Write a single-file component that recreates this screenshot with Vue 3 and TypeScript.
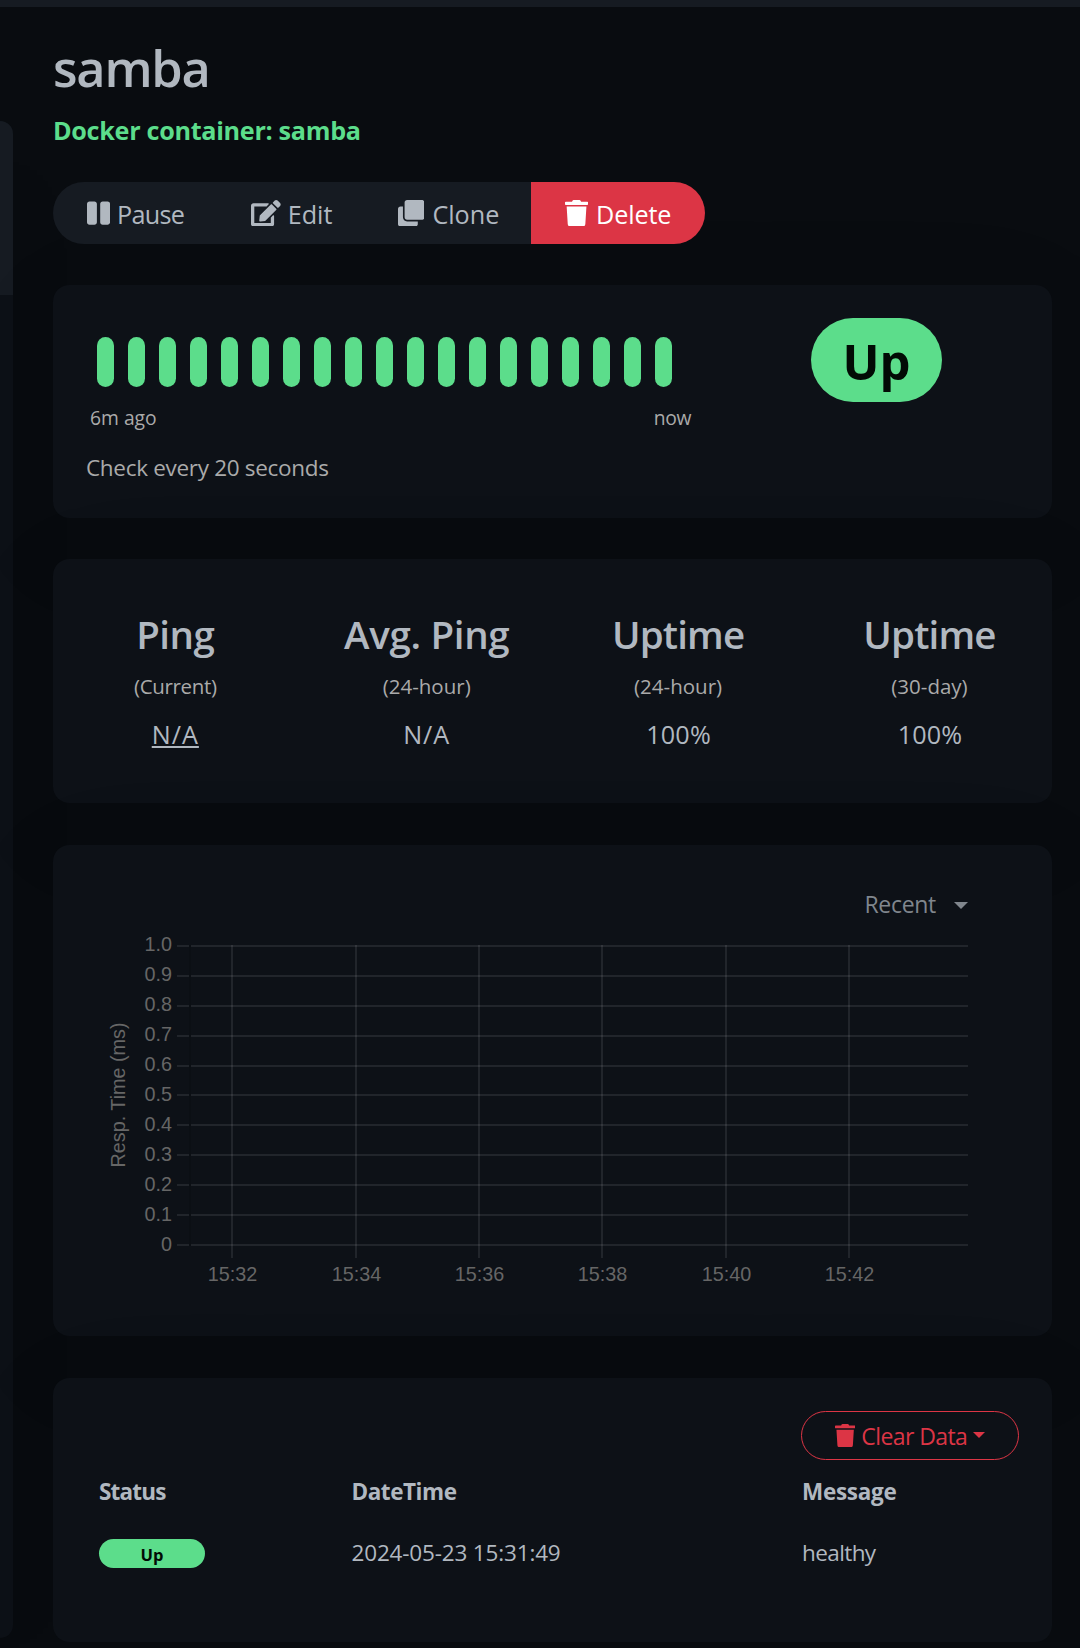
<script setup lang="ts">
interface Icon {
  w: number
  d: string
}

interface Action {
  key: string
  label: string
  icon: Icon
}

const trash: Icon = {
  w: 448,
  d: 'M432 32H312l-9.4-18.7A24 24 0 0 0 281.1 0H166.8a23.72 23.72 0 0 0-21.4 13.3L136 32H16A16 16 0 0 0 0 48v32a16 16 0 0 0 16 16h416a16 16 0 0 0 16-16V48a16 16 0 0 0-16-16zM53.2 467a48 48 0 0 0 47.9 45h245.8a48 48 0 0 0 47.9-45L416 128H32z',
}

const actions: Action[] = [
  {
    key: 'pause',
    label: 'Pause',
    icon: {
      w: 448,
      d: 'M144 479H48c-26.5 0-48-21.5-48-48V79c0-26.5 21.5-48 48-48h96c26.5 0 48 21.5 48 48v352c0 26.5-21.5 48-48 48zm304-48V79c0-26.5-21.5-48-48-48h-96c-26.5 0-48 21.5-48 48v352c0 26.5 21.5 48 48 48h96c26.5 0 48-21.5 48-48z',
    },
  },
  {
    key: 'edit',
    label: 'Edit',
    icon: {
      w: 576,
      d: 'M402.6 83.2l90.2 90.2c3.8 3.8 3.8 10 0 13.8L274.4 405.6l-92.8 10.3c-12.4 1.4-22.9-9.1-21.5-21.5l10.3-92.8L388.8 83.2c3.8-3.8 10-3.8 13.8 0zm162-22.9l-48.8-48.8c-15.2-15.2-39.9-15.2-55.2 0l-35.4 35.4c-3.8 3.8-3.8 10 0 13.8l90.2 90.2c3.8 3.8 10 3.8 13.8 0l35.4-35.4c15.2-15.3 15.2-40 0-55.2zM384 346.2V448H64V128h229.8c3.2 0 6.2-1.3 8.5-3.5l40-40c7.6-7.6 2.2-20.5-8.5-20.5H48C21.5 64 0 85.5 0 112v352c0 26.5 21.5 48 48 48h352c26.5 0 48-21.5 48-48V306.2c0-10.7-12.9-16-20.5-8.5l-40 40c-2.2 2.3-3.5 5.3-3.5 8.5z',
    },
  },
  {
    key: 'clone',
    label: 'Clone',
    icon: {
      w: 512,
      d: 'M464 0c26.51 0 48 21.49 48 48v288c0 26.51-21.49 48-48 48H176c-26.51 0-48-21.49-48-48V48c0-26.51 21.49-48 48-48h288M176 416c-44.112 0-80-35.888-80-80V128H48c-26.51 0-48 21.49-48 48v288c0 26.51 21.49 48 48 48h288c26.51 0 48-21.49 48-48v-48H176z',
    },
  },
  { key: 'delete', label: 'Delete', icon: trash },
]

const stats = [
  { key: 'ping', title: 'Ping', period: '(Current)', value: 'N/A', link: true },
  { key: 'avg', title: 'Avg. Ping', period: '(24-hour)', value: 'N/A', link: false },
  { key: 'up-day', title: 'Uptime', period: '(24-hour)', value: '100%', link: false },
  { key: 'up-month', title: 'Uptime', period: '(30-day)', value: '100%', link: false },
]

// Gridline tops inside the chart's own coordinate system
const rows = [
  { label: '1.0', y: 15 },
  { label: '0.9', y: 45 },
  { label: '0.8', y: 75 },
  { label: '0.7', y: 105 },
  { label: '0.6', y: 135 },
  { label: '0.5', y: 164 },
  { label: '0.4', y: 194 },
  { label: '0.3', y: 224 },
  { label: '0.2', y: 254 },
  { label: '0.1', y: 284 },
  { label: '0', y: 314 },
]
const times = [
  { label: '15:32', x: 145 },
  { label: '15:34', x: 269 },
  { label: '15:36', x: 392 },
  { label: '15:38', x: 515 },
  { label: '15:40', x: 639 },
  { label: '15:42', x: 762 },
]
</script>

<template>
  <div class="page">
    <header class="topbar"></header>
    <div class="body">
      <aside class="sidebar">
        <div class="sidebar-head"></div>
      </aside>

      <main class="content">
        <h1 class="title">samba</h1>
        <p class="subtitle">Docker container: samba</p>

        <div class="actions">
          <button v-for="a in actions" :key="a.key" class="action" :class="a.key">
            <svg class="icon" :viewBox="`0 0 ${a.icon.w} 512`"><path :d="a.icon.d" /></svg>
            <span>{{ a.label }}</span>
          </button>
        </div>

        <section class="card heartbeat">
          <div class="beats-col">
            <div class="beats">
              <i v-for="n in 19" :key="n" class="beat"></i>
            </div>
            <div class="range"><span>6m ago</span><span class="now">now</span></div>
            <p class="interval">Check every 20 seconds</p>
          </div>
          <div class="status-col"><span class="status-pill">Up</span></div>
        </section>

        <section class="card stats">
          <div v-for="s in stats" :key="s.key" class="stat" :class="s.key">
            <h4>{{ s.title }}</h4>
            <p class="period">{{ s.period }}</p>
            <p class="value" :class="{ na: s.value === 'N/A' }"><span :class="{ link: s.link }">{{ s.value }}</span></p>
          </div>
        </section>

        <section class="card chart-card">
          <div class="period-select">
            <span>Recent</span>
            <svg class="caret" viewBox="0 0 14 7"><path d="M0 0h14L7 7z" /></svg>
          </div>
          <svg class="chart" width="933" height="370" viewBox="0 0 933 370">
            <g class="grid">
              <template v-for="r in rows" :key="r.label">
                <rect x="91" :y="r.y" width="12" height="2" />
                <rect x="105" :y="r.y" width="777" height="2" />
              </template>
              <rect v-for="t in times" :key="t.label" :x="t.x" y="15" width="2" height="313" />
              <rect x="103" y="15" width="2" height="301" class="axis" />
            </g>
            <g class="labels">
              <text v-for="(r, i) in rows" :key="r.label" x="86" :y="21 + i * 30" text-anchor="end">{{ r.label }}</text>
              <text v-for="t in times" :key="t.label" :x="t.x + 1.4" y="351" text-anchor="middle">{{ t.label }}</text>
              <text transform="translate(39 165) rotate(-90)" text-anchor="middle">Resp. Time (ms)</text>
            </g>
          </svg>
        </section>

        <section class="card events">
          <div class="toolbar">
            <button class="clear">
              <svg class="icon" :viewBox="`0 0 ${trash.w} 512`"><path :d="trash.d" /></svg>
              <span>Clear Data</span>
              <svg class="caret" viewBox="0 0 12 6"><path d="M0 0h12L6 6z" /></svg>
            </button>
          </div>
          <div class="row head">
            <span class="h-status">Status</span><span class="h-date">DateTime</span><span class="h-msg">Message</span>
          </div>
          <div class="row">
            <span><b class="badge">Up</b></span><span class="date">2024-05-23 15:31:49</span><span class="msg">healthy</span>
          </div>
        </section>
      </main>
    </div>
  </div>
</template>

<style>
body {
  background: #090c10;
}
</style>

<style scoped>
.page {
  width: 1080px;
  height: 1648px;
  overflow: hidden;
  background: #090c10;
  color: #b1b8c0;
  font-family: "Open Sans", "Noto Sans", sans-serif;
}
h1, h4, p {
  margin: 0;
  font-weight: 400;
}
.topbar {
  height: 7px;
  background: #161b22;
}
.body {
  display: flex;
  align-items: flex-start;
}
.sidebar {
  flex: none;
  width: 13px;
  height: 1517px;
  margin-top: 114px;
  border-radius: 0 16px 16px 0;
  background: #0d1117;
  box-shadow: 0 25px 115px rgba(0, 0, 0, 0.07);
  overflow: hidden;
}
.sidebar-head {
  height: 174px;
  background: #161b22;
}
.content {
  width: 999px;
  margin-left: 40px;
  padding-top: 29px;
}
.title {
  font-size: 50.5px;
  font-weight: 600;
  line-height: 63px;
  letter-spacing: -1.25px;
}
.subtitle {
  margin-top: 12px;
  color: #5cdd8b;
  font-size: 25.2px;
  font-weight: 700;
  line-height: 39px;
  letter-spacing: -0.31px;
}
.actions {
  display: flex;
  width: 652px;
  height: 62px;
  margin-top: 32px;
  border-radius: 31px;
  overflow: hidden;
}
.action {
  display: flex;
  align-items: center;
  gap: 7px;
  border: 0;
  padding: 0 0 0 34px;
  background: #161b22;
  color: #b1b8c0;
  font: 400 25.2px/62px "Open Sans", sans-serif;
}
.action span {
  padding-top: 1px;
}
.icon {
  flex: none;
  height: 26.4px;
  fill: currentColor;
}
.pause { width: 165px; letter-spacing: -0.75px; }
.edit { width: 147px; padding-left: 33px; }
.clone { width: 166px; padding-left: 33px; gap: 8px; }
.delete { width: 174px; gap: 8px; background: #dc3545; color: #fff; letter-spacing: -0.15px; }
.card {
  box-sizing: border-box;
  margin-top: 41px;
  padding: 33px;
  border-radius: 16.5px;
  background: #0d1117;
  box-shadow: 0 25px 115px rgba(0, 0, 0, 0.07);
}
.heartbeat {
  display: flex;
  height: 233px;
}
.beats-col {
  width: 628px;
}
.beats {
  display: flex;
  gap: 14px;
  padding: 19px 0 0 11px;
}
.beat {
  flex: none;
  width: 17px;
  height: 50px;
  border-radius: 8.5px;
  background: #5cdd8b;
}
.range {
  display: flex;
  justify-content: space-between;
  margin-top: 16px;
  padding: 0 23px 0 4px;
  color: #aaa;
  font-size: 19.3px;
  line-height: 30px;
}
.now {
  letter-spacing: -0.4px;
}
.interval {
  margin-top: 18px;
  color: #aaa;
  font-size: 22.5px;
  line-height: 34px;
  letter-spacing: -0.31px;
}
.status-col {
  width: 324px;
  text-align: center;
  margin-right: -20px;
}
.status-pill {
  display: inline-block;
  box-sizing: border-box;
  width: 131px;
  height: 84px;
  padding: 1px 0 0 1px;
  border-radius: 42px;
  background: #5cdd8b;
  color: #020b05;
  font-size: 49px;
  font-weight: 700;
  line-height: 84px;
}
.stats {
  display: flex;
  height: 244px;
  padding: 51px 0 0;
}
.stat {
  flex: none;
  width: 251.4px;
  text-align: center;
}
.stat:first-child {
  margin-left: -3.4px;
}
.stats h4 {
  padding-top: 1px;
  font-size: 38.5px;
  font-weight: 600;
  line-height: 46px;
}
.ping h4 { letter-spacing: -0.5px; }
.avg h4 { letter-spacing: -0.3px; }
.up-day h4, .up-month h4 { letter-spacing: -0.85px; }
.period {
  margin-top: 13px;
  color: #aaa;
  font-size: 20.5px;
  line-height: 32px;
}
.ping .period { letter-spacing: -0.33px; }
.value {
  margin-top: 13px;
  padding-left: 1px;
  font-size: 25.2px;
  line-height: 38px;
  letter-spacing: 0.15px;
}
.na {
  padding-left: 0;
  letter-spacing: 1px;
}
.link {
  text-decoration: underline;
  text-decoration-thickness: 2px;
  text-underline-offset: 2px;
}
.chart-card {
  height: 491px;
  margin-top: 42px;
  padding-top: 42px;
}
.period-select {
  display: flex;
  align-items: center;
  justify-content: flex-end;
  gap: 18px;
  height: 34px;
  padding-right: 51px;
  color: #80868d;
  font-size: 23px;
  letter-spacing: -0.3px;
}
.period-select .caret {
  width: 14px;
  height: 7px;
  margin-top: 3px;
  fill: currentColor;
}
.chart {
  display: block;
  margin-top: 9px;
}
.grid {
  fill: rgba(255, 255, 255, 0.085);
}
.axis {
  fill: rgba(0, 0, 0, 0.1);
}
.labels {
  fill: #666;
  font-family: "Liberation Sans", Arial, sans-serif;
  font-size: 19.8px;
}
.events {
  height: 264px;
  margin-top: 42px;
}
.toolbar {
  display: flex;
  justify-content: flex-end;
}
.clear {
  display: flex;
  align-items: center;
  box-sizing: border-box;
  width: 218px;
  height: 49px;
  padding: 0 0 0 33px;
  border: 1px solid #dc3545;
  border-radius: 25px;
  background: transparent;
  color: #dc3545;
  font: 400 23px/47px "Open Sans", sans-serif;
  letter-spacing: -0.58px;
}
.clear span {
  padding-top: 1px;
}
.clear .icon {
  height: 23.2px;
  margin-right: 6px;
}
.clear .caret {
  width: 12px;
  height: 6px;
  margin-left: 6px;
  margin-top: -1px;
  fill: currentColor;
}
.row {
  display: grid;
  grid-template-columns: 252.5px 450.5px 1fr;
  align-items: center;
  height: 61px;
  padding-left: 13px;
  font-size: 22.5px;
}
.head {
  margin-top: 1px;
  font-weight: 700;
}
.h-status { letter-spacing: -0.82px; }
.h-date { letter-spacing: -0.45px; }
.h-msg { letter-spacing: -0.3px; }
.date { letter-spacing: -0.17px; }
.msg { letter-spacing: -0.6px; }
.badge {
  display: block;
  width: 106px;
  height: 29px;
  margin-top: 2px;
  border-radius: 15px;
  background: #5cdd8b;
  color: #020b05;
  font-size: 16.5px;
  font-weight: 700;
  line-height: 31px;
  text-align: center;
}
</style>
